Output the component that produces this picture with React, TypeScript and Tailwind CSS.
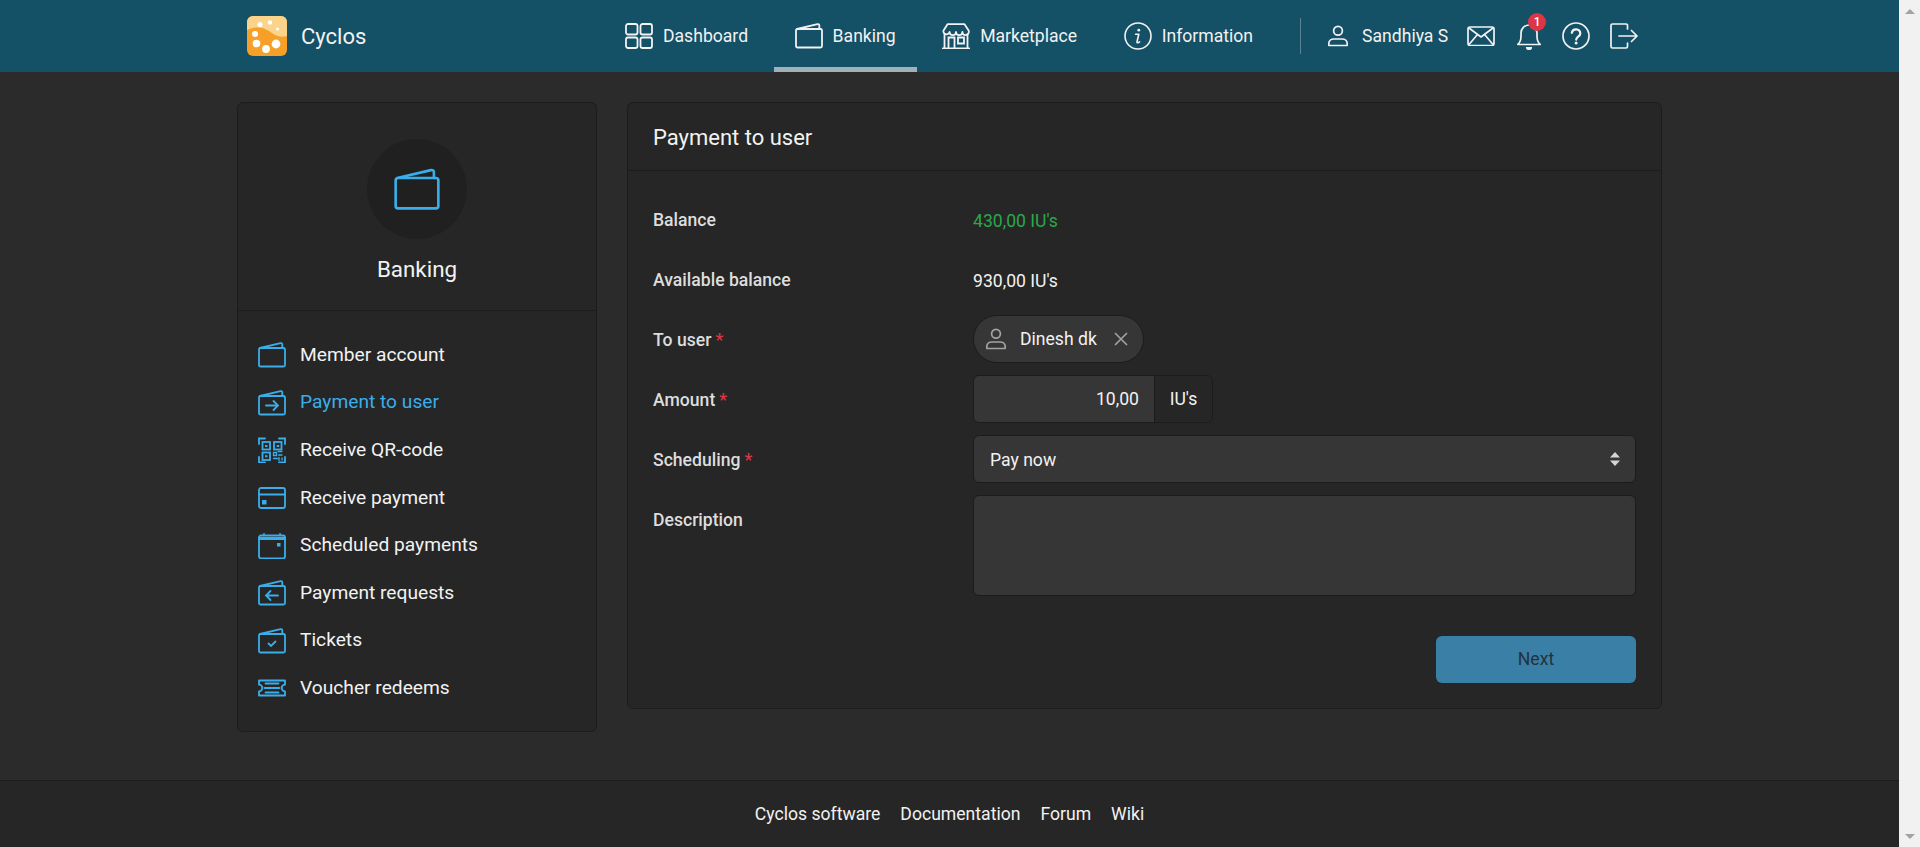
import React from "react";

const Wallet = ({ children, sw = 1.8 }: { children?: React.ReactNode; sw?: number }) => (
  <>
    <rect x={1} y={6} width={26} height={18.5} rx={1.5} strokeWidth={sw} />
    <path d="M2 6 22.5 1.2q1.6-.3 1.8 1.2V6" strokeWidth={sw} strokeLinejoin="round" />
    {children}
  </>
);

const Ico = ({ className, w = 28, h = 26, vb, children }: { className?: string; w?: number; h?: number; vb?: string; children: React.ReactNode }) => (
  <svg width={w} height={h} viewBox={vb ?? `0 0 ${w} ${h}`} fill="none" stroke="currentColor" strokeWidth={1.8} strokeLinecap="round" className={className}>
    {children}
  </svg>
);

const DashIcon = () => (
  <Ico>
    <rect x={1} y={1} width={11.5} height={10.5} rx={2} />
    <rect x={15.5} y={1} width={11.5} height={10.5} rx={2} />
    <rect x={1} y={14.5} width={11.5} height={10.5} rx={2} />
    <rect x={15.5} y={14.5} width={11.5} height={10.5} rx={2} />
  </Ico>
);

const StoreIcon = () => (
  <Ico>
    <path d="M.7 25.5h26.6M2.5 25.5V11M25.5 25.5V11" />
    <path d="M5.5 1.2h17l4.3 6.5v1.2a3.2 3.2 0 0 1-6.4 0 3.2 3.2 0 0 1-6.4 0 3.2 3.2 0 0 1-6.4 0 3.2 3.2 0 0 1-6.2 0V7.7z" strokeLinejoin="round" />
    <path d="M6.5 25.5V14.5h6v11M16 14.5h6v6h-6z" />
  </Ico>
);

const InfoIcon = () => (
  <svg width={28} height={28} viewBox="0 0 28 28" fill="none" stroke="currentColor" strokeWidth={1.6}>
    <circle cx={14} cy={14} r={13} />
    <circle cx={14.8} cy={8.2} r={1.4} fill="currentColor" stroke="none" />
    <path d="M11.6 12.2h3.2l-1.8 7.6q-.2 1.2 1 .9l1.6-.8" strokeLinecap="round" strokeLinejoin="round" />
  </svg>
);

const PersonIcon = ({ className }: { className?: string }) => (
  <svg width={20} height={22} viewBox="0 0 20 22" fill="none" stroke="currentColor" strokeWidth={1.7} className={className}>
    <circle cx={10} cy={5.8} r={4.4} />
    <path d="M.8 20.5v-1.6c0-3.2 2.6-4.9 5-4.9h8.4c2.4 0 5 1.7 5 4.9v1.6z" strokeLinejoin="round" />
  </svg>
);

const MailIcon = () => (
  <svg width={28} height={20} viewBox="0 0 28 20" fill="none" stroke="currentColor" strokeWidth={1.7} strokeLinejoin="round">
    <rect x={1} y={1} width={26} height={18.5} rx={2} />
    <path d="M2 2 14 11 26 2M2 18.5l8.5-10M26 18.5l-8.5-10" />
  </svg>
);

const BellIcon = () => (
  <svg width={24} height={28} viewBox="0 0 24 28" fill="none" stroke="currentColor" strokeWidth={1.7} strokeLinejoin="round">
    <path d="M.8 22.5c2.4-2 3.2-4 3.2-8.5V11a8 8 0 0 1 16 0v3c0 4.5.8 6.5 3.2 8.5z" />
    <path d="M8.8 25h6.4a3.2 3.2 0 0 1-6.4 0z" fill="currentColor" stroke="none" />
  </svg>
);

const HelpIcon = () => (
  <svg width={28} height={28} viewBox="0 0 28 28" fill="none" stroke="currentColor" strokeWidth={1.7}>
    <circle cx={14} cy={14} r={13} />
    <path d="M9.8 10.8a4.3 4.3 0 0 1 8.5.6c0 3-3.7 3-4.1 6.2" strokeWidth={2.2} strokeLinecap="round" />
    <circle cx={14.1} cy={21} r={1.5} fill="currentColor" stroke="none" />
  </svg>
);

const LogoutIcon = () => (
  <svg width={28} height={26} viewBox="0 0 28 26" fill="none" stroke="currentColor" strokeWidth={1.7} strokeLinecap="round" strokeLinejoin="round">
    <path d="M17.5 6V2.6Q17.5 1 16 1H2.6Q1 1 1 2.6v20.8Q1 25 2.6 25H16q1.5 0 1.5-1.6V20" />
    <path d="M9 13h18M21.5 7.5 27 13l-5.5 5.5" />
  </svg>
);

const Logo = () => (
  <svg width={40} height={40} viewBox="0 0 40 40" className="rounded-md">
    <rect width={40} height={40} fill="#f6a027" />
    <path d="M0 0h40v20c-8 2-12-1-18-5-8-5-14-4-22-1z" fill="#fbd38a" />
    <circle cx={13} cy={8.5} r={2.6} fill="#fff" />
    <circle cx={23} cy={6.5} r={2.3} fill="#fff" />
    <circle cx={30.5} cy={13} r={1.6} fill="#fff" />
    <circle cx={8} cy={18} r={3} fill="#fff" />
    <circle cx={9.5} cy={27.5} r={3.8} fill="#fff" />
    <circle cx={19} cy={33} r={3.9} fill="#fff" />
    <circle cx={29} cy={28} r={4.4} fill="#fff" />
  </svg>
);

const menu: { label: string; active?: boolean; icon: React.ReactNode }[] = [
  { label: "Member account", icon: <Wallet /> },
  {
    label: "Payment to user",
    active: true,
    icon: (
      <Wallet>
        <path d="M8 15.5h12M15.5 11l4.5 4.5-4.5 4.5" />
      </Wallet>
    ),
  },
  {
    label: "Receive QR-code",
    icon: (
      <>
        <path d="M1 7V1.5h6M21 1.5h6V7M1 20v5.5h6M21 25.5h6V20" />
        <rect x={4.5} y={5} width={7.5} height={7.5} />
        <rect x={16} y={5} width={7.5} height={7.5} />
        <rect x={4.5} y={15.5} width={7.5} height={7.5} />
        <path d="M7 8h2.5v2H7zM18.7 8h2.5v2h-2.5zM7 18.2h2.5v2H7z" fill="currentColor" stroke="none" />
        <path d="M15.5 15.5h3v3h-3zM20 14.5h4M20.5 18h3.5M15.5 21.5h4M21 20.5v3M24 21v2" strokeWidth={1.3} />
      </>
    ),
  },
  {
    label: "Receive payment",
    icon: (
      <>
        <rect x={1} y={3} width={26} height={20} rx={2} />
        <path d="M1 9.5h26" strokeWidth={2} />
        <rect x={4} y={15} width={4.5} height={4.5} rx={0.5} fill="currentColor" stroke="none" />
      </>
    ),
  },
  {
    label: "Scheduled payments",
    icon: (
      <>
        <rect x={1} y={2.5} width={26} height={23} rx={2} />
        <path d="M1 5.5h26" strokeWidth={3} />
        <path d="M6 .5v2M22 .5v2" strokeWidth={1.5} />
        <rect x={19} y={10} width={3.5} height={3.5} fill="currentColor" stroke="none" />
      </>
    ),
  },
  {
    label: "Payment requests",
    icon: (
      <Wallet>
        <path d="M20 15.5H8M12.5 11 8 15.5l4.5 4.5" />
      </Wallet>
    ),
  },
  {
    label: "Tickets",
    icon: (
      <Wallet>
        <path d="M10.5 15.5 13 18l4.5-4.5" />
      </Wallet>
    ),
  },
  {
    label: "Voucher redeems",
    icon: (
      <>
        <path d="M1 3.5h26v4.2a3 3 0 0 0 0 6.6v4.2H1v-4.2a3 3 0 0 0 0-6.6z" strokeLinejoin="round" transform="translate(0 2)" />
        <path d="M7.5 8.5h13M6.5 13h15M7.5 17.5h13" strokeWidth={1.8} />
      </>
    ),
  },
];

const font = "font-['Roboto',sans-serif]";

function Row({ label, req, tall, children }: { label: string; req?: boolean; tall?: boolean; children: React.ReactNode }) {
  return (
    <div className={`flex mb-3 ${tall ? "min-h-[101px]" : "min-h-[48px]"}`}>
      <div className="w-[320px] h-[48px] shrink-0 leading-[51px] font-medium text-[#dddddd]">
        {label}
        {req && <span className="text-[#dc3545] ml-1">*</span>}
      </div>
      <div className="flex-1 min-w-0 flex items-center">{children}</div>
    </div>
  );
}

export default function App() {
  return (
    <div className={`${font} flex h-[847px] w-full overflow-hidden bg-[#2b2b2b] text-[17.6px] text-[#f2f2f2]`}>
      <div className="flex-1 min-w-0 flex flex-col">
        <header className="h-[72px] shrink-0 bg-[#145066]">
          <div className="mx-auto w-[1425px] h-full pl-[10px] flex items-center">
            <Logo />
            <span className="ml-[14px] text-[22px] w-[65px]">Cyclos</span>
            <nav className="ml-[238px] flex h-full gap-[4.5px]">
              {[
                { t: "Dashboard", i: <DashIcon /> },
                { t: "Banking", i: <Ico><Wallet /></Ico>, on: true },
                { t: "Marketplace", i: <StoreIcon /> },
                { t: "Information", i: <InfoIcon /> },
              ].map((n) => (
                <a key={n.t} className={`flex items-center gap-[10px] px-[21px] border-b-[5px] pt-[5px] ${n.on ? "border-[#9fb1b9]" : "border-transparent"}`}>
                  {n.i}
                  <span>{n.t}</span>
                </a>
              ))}
            </nav>
            <div className="ml-[26px] w-px h-[36px] bg-white/30" />
            <PersonIcon className="ml-[27px]" />
            <span className="ml-[14px]">Sandhiya S</span>
            <div className="ml-[19px]"><MailIcon /></div>
            <div className="ml-[22px] relative">
              <BellIcon />
              <span className="absolute -top-[9px] left-[11px] w-[18px] h-[18px] rounded-full bg-[#dc3545] text-white text-[12px] font-medium leading-[18px] text-center">1</span>
            </div>
            <div className="ml-[21px]"><HelpIcon /></div>
            <div className="ml-[20px]"><LogoutIcon /></div>
          </div>
        </header>

        <main className="flex-1 min-h-0">
          <div className="mx-auto w-[1425px] pt-[30px] flex gap-[30px] items-start">
            <aside className="w-[360px] shrink-0 h-[630px] bg-[#262626] border border-[#1c1c1c] rounded-md">
              <div className="h-[208px] border-b border-[#1c1c1c] pt-[36px] flex flex-col items-center">
                <div className="w-[100px] h-[100px] rounded-full bg-[#202020] flex items-center justify-center text-[#3aaeea]">
                  <svg width={46} height={43} viewBox="0 0 28 26" fill="none" stroke="currentColor" strokeLinecap="round">
                    <Wallet sw={1.6} />
                  </svg>
                </div>
                <div className="mt-[16px] text-[22.4px] leading-[28px]">Banking</div>
              </div>
              <ul className="pt-[20.5px] pl-[20px]">
                {menu.map((m) => (
                  <li key={m.label} className={`h-[47.6px] flex items-center gap-[14px] text-[19.2px] ${m.active ? "text-[#3aaeea]" : ""}`}>
                    <span className="text-[#3aaeea] flex">
                      <Ico>{m.icon}</Ico>
                    </span>
                    {m.label}
                  </li>
                ))}
              </ul>
            </aside>

            <section className="w-[1035px] h-[607px] bg-[#262626] border border-[#1c1c1c] rounded-md">
              <div className="h-[68px] border-b border-[#1c1c1c] px-[25px] pt-[2px] flex items-center text-[22px]">Payment to user</div>
              <div className="px-[25px] pt-[24px]">
                <Row label="Balance"><span className="text-[#2ba84a] pt-[4px]">430,00 IU's</span></Row>
                <Row label="Available balance"><span className="pt-[4px]">930,00 IU's</span></Row>
                <Row label="To user" req>
                  <div className="h-[48px] w-[171px] rounded-[24px] bg-[#363636] border border-[#1c1c1c] flex items-center pl-[12px]">
                    <PersonIcon className="text-[#a3a3a3]" />
                    <span className="ml-[14px]">Dinesh dk</span>
                    <svg width={14} height={14} viewBox="0 0 14 14" stroke="#a3a3a3" strokeWidth={1.6} className="ml-[17px]">
                      <path d="M1 1 13 13M13 1 1 13" />
                    </svg>
                  </div>
                </Row>
                <Row label="Amount" req>
                  <div className="flex h-[48px] w-[240px] rounded-md border border-[#1c1c1c] overflow-hidden">
                    <input readOnly value="10,00" className="w-[181px] bg-[#363636] text-right pr-[15px] pt-[1px] outline-none border-r border-[#1c1c1c]" />
                    <span className="flex-1 flex items-center justify-center bg-[#262626]">IU's</span>
                  </div>
                </Row>
                <Row label="Scheduling" req>
                  <div className="relative w-full">
                    <select className="appearance-none w-full h-[48px] rounded-md bg-[#363636] border border-[#1c1c1c] pl-[16px] pt-[2px] outline-none">
                      <option>Pay now</option>
                    </select>
                    <svg width={10} height={14} viewBox="0 0 10 14" fill="#d4d4d4" className="absolute right-[16px] top-[17px]">
                      <path d="M5 0 10 5.5H0zM5 14 0 8.5h10z" />
                    </svg>
                  </div>
                </Row>
                <Row label="Description" tall>
                  <textarea readOnly className="w-full h-[101px] rounded-md bg-[#363636] border border-[#1c1c1c] resize-none outline-none" />
                </Row>
                <div className="flex justify-end pt-[28px]">
                  <button className="w-[200px] h-[47px] rounded-md bg-[#3a80a6] text-[#22323d]">Next</button>
                </div>
              </div>
            </section>
          </div>
        </main>

        <footer className="h-[67px] shrink-0 bg-[#262626] border-t border-[#1c1c1c] flex items-center justify-center gap-[20px] text-[17.6px]">
          <a>Cyclos software</a>
          <a>Documentation</a>
          <a>Forum</a>
          <a>Wiki</a>
        </footer>
      </div>

      <div className="w-[21px] shrink-0 bg-[#f1f1f1] flex flex-col items-center justify-between py-[9px] pb-[8px]">
        <div className="w-0 h-0 border-x-[5px] border-x-transparent border-b-[5px] border-b-[#a3a3a3]" />
        <div className="w-0 h-0 border-x-[5px] border-x-transparent border-t-[5px] border-t-[#a3a3a3]" />
      </div>
    </div>
  );
}
